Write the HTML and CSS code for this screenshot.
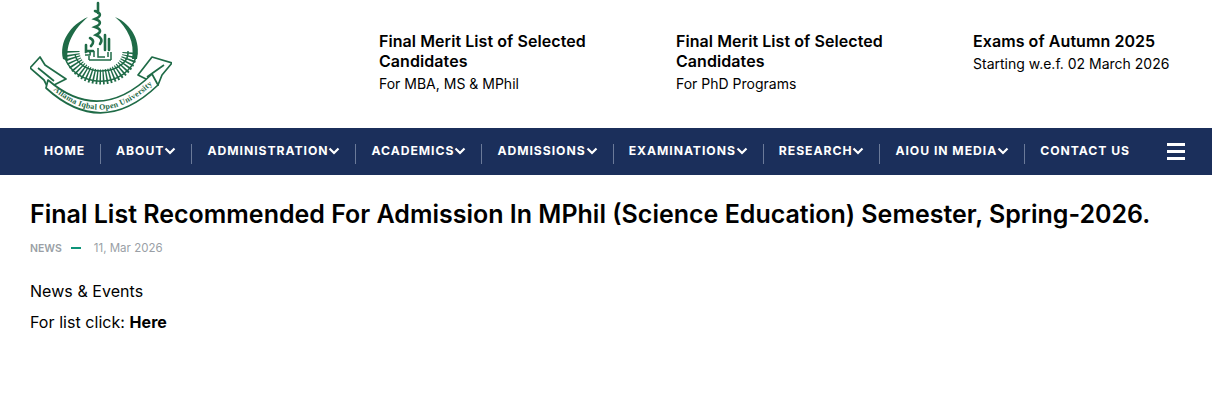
FILE: index.html
```html
<!DOCTYPE html>
<html lang="en">
<head>
<meta charset="utf-8">
<title>Final List Recommended For Admission</title>
<link rel="stylesheet" href="styles.css">
</head>
<body>
<header class="top">
  <a class="logo" href="#" aria-label="Allama Iqbal Open University">
    <svg width="142" height="120" viewBox="0 0 142 120" fill="#1f6b47">
      <defs><path id="ribbon" d="M22 88 Q72 132 124 82"/></defs>
      <path d="M58 16 C40 24 29 41 33 58 L38 60 C35 43 44 28 58 16Z"/>
      <path d="M85 16 C102 23 111 41 107 58 L102 58 C105 42 98 27 85 16Z"/>
      <path class="comb-line" d="M35 57 A37 33 0 0 0 106 56"/>
      <path class="comb" d="M42 50 A29 26 0 0 0 100 50"/>
      <path class="comb-line" d="M45 53 A26 18 0 0 0 98 50"/>
      <g class="tower">
        <path d="M68 2 V12 M65 10 C71 12 72 15 65 18 C71 20 72 23 65 26 C71 28 72 31 66 34 C71 36 73 39 70 43"/>
        <path d="M60 37 C64 39 64 42 61 45 M75 34 V49 M79 38 V49 M56 44 V50 H63"/>
      </g>
      <g class="tower-fine">
        <path d="M55 52 C58 49 61 50 60 54 H55 M64 50 V56 M68 47 V56 H75 M59 59 H81 M59 55 V59 M81 51 V59 M78 51 V56"/>
      </g>
      <g class="banner">
        <path d="M0 67 L10 56 L15 64 L36 78 L18 87 L14 79 Z"/>
        <path d="M142 62 L122 56 L108 74 L128 84 L132 74 Z"/>
        <path d="M18 79 Q70 124 122 73 L128 84 Q72 138 16 87 Z"/>
        <path d="M8 67 L24 80 M134 64 L117 76"/>
      </g>
      <text class="logo-text"><textPath href="#ribbon" startOffset="50%" text-anchor="middle">Allama Iqbal Open University</textPath></text>
    </svg>
  </a>
  <div class="notices">
    <a class="notice" href="#"><h3>Final Merit List of Selected Candidates</h3><p>For MBA, MS &amp; MPhil</p></a>
    <a class="notice" href="#"><h3>Final Merit List of Selected Candidates</h3><p>For PhD Programs</p></a>
    <a class="notice" href="#"><h3>Exams of Autumn 2025</h3><p>Starting w.e.f. 02 March 2026</p></a>
  </div>
</header>
<nav class="nav">
  <ul class="menu">
    <li><a href="#">HOME</a></li>
    <li><a href="#">ABOUT<svg class="chev" viewBox="0 0 12 8"><path d="M1.5 1.5 6 6l4.5-4.5"/></svg></a></li>
    <li><a href="#">ADMINISTRATION<svg class="chev" viewBox="0 0 12 8"><path d="M1.5 1.5 6 6l4.5-4.5"/></svg></a></li>
    <li><a href="#">ACADEMICS<svg class="chev" viewBox="0 0 12 8"><path d="M1.5 1.5 6 6l4.5-4.5"/></svg></a></li>
    <li><a href="#">ADMISSIONS<svg class="chev" viewBox="0 0 12 8"><path d="M1.5 1.5 6 6l4.5-4.5"/></svg></a></li>
    <li><a href="#">EXAMINATIONS<svg class="chev" viewBox="0 0 12 8"><path d="M1.5 1.5 6 6l4.5-4.5"/></svg></a></li>
    <li><a href="#">RESEARCH<svg class="chev" viewBox="0 0 12 8"><path d="M1.5 1.5 6 6l4.5-4.5"/></svg></a></li>
    <li><a href="#">AIOU IN MEDIA<svg class="chev" viewBox="0 0 12 8"><path d="M1.5 1.5 6 6l4.5-4.5"/></svg></a></li>
    <li><a href="#">CONTACT US</a></li>
  </ul>
  <button class="burger" aria-label="Menu"><span></span><span></span><span></span></button>
</nav>
<main class="content">
  <h1>Final List Recommended For Admission In MPhil (Science Education) Semester, Spring-2026.</h1>
  <div class="meta"><span class="cat">NEWS</span><span class="dash"></span><span class="date">11, Mar 2026</span></div>
  <p>News &amp; Events</p>
  <p>For list click: <a href="#">Here</a></p>
</main>
</body>
</html>
```
FILE: styles.css
```css
* { box-sizing: border-box; }
html, body { margin: 0; padding: 0; }
body { font-family: "Inter", "Noto Sans", sans-serif; color: #000; background: #fff; overflow: hidden; }
a { color: inherit; text-decoration: none; }

.top { height: 128px; display: flex; padding-left: 30px; }
.logo { width: 142px; padding-top: 1px; display: block; }
.logo svg { display: block; }
.comb { fill: none; stroke: #1f6b47; stroke-width: 15; stroke-dasharray: 1.5 1.7; }
.comb-line { fill: none; stroke: #1f6b47; stroke-width: 1.5; }
.tower { fill: none; stroke: #1f6b47; stroke-width: 2.6; stroke-linecap: round; }
.tower-fine { fill: none; stroke: #1f6b47; stroke-width: 1.5; }
.banner { fill: #fff; stroke: #1f6b47; stroke-width: 1.7; stroke-linejoin: round; }
.logo-text { font-family: "Liberation Serif", serif; font-size: 8px; font-weight: 700; fill: #1f6b47; letter-spacing: .3px; }
.notices { display: flex; margin-left: 207px; padding-top: 31px; }
.notice { display: block; width: 297px; }
.notice:last-child { width: 205px; }
.notice h3 { margin: 0 0 2px; width: 240px; font-size: 16px; line-height: 20px; font-weight: 600; letter-spacing: .07px; }
.notice p { margin: 0; font-size: 14px; line-height: 22px; }

.nav { height: 47px; background: #1b2f5b; display: flex; align-items: center; padding-left: 29px; }
.menu { list-style: none; margin: 0; padding: 5px 0 0; display: flex; flex: 1; }
.menu li { height: 20px; padding: 0 15px; border-right: 1px solid #6b7a99; display: flex; align-items: flex-start; flex: none; }
.menu li:last-child { border-right: 0; }
.menu a { display: flex; align-items: center; color: #fff; font-size: 12.2px; line-height: 13px; font-weight: 700; letter-spacing: .95px; white-space: nowrap; }
.chev { width: 12px; height: 8px; margin-left: 0; fill: none; stroke: #fff; stroke-width: 2.2; }
.burger { width: 18px; height: 17px; margin-right: 27px; padding: 0; border: 0; background: none; display: flex; flex-direction: column; justify-content: space-between; flex: none; }
.burger span { display: block; height: 3px; width: 18px; background: #fff; }

.content { padding: 23px 30px 0; }
.content h1 { margin: 0; font-size: 25px; line-height: 32px; font-weight: 600; white-space: nowrap; }
.meta { display: flex; align-items: center; margin-top: 8px; height: 20px; font-size: 11.5px; color: #9a9fa6; }
.cat { font-weight: 600; font-size: 10.5px; }
.dash { width: 10px; height: 2px; background: #0d9479; margin: 0 13px 0 9px; }
.content p { margin: 0; font-size: 16px; line-height: 24px; letter-spacing: .05px; }
.meta + p { margin-top: 21px; }
.content p + p { margin-top: 7px; }
.content p a { font-weight: 700; }
```
